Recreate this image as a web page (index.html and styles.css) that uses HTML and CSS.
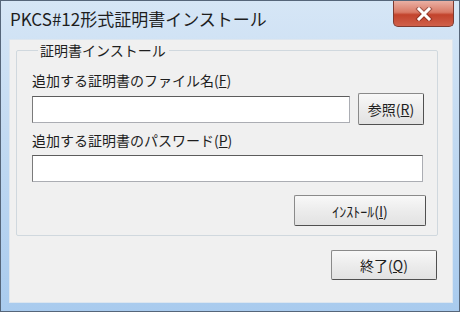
FILE: index.html
```html
<!DOCTYPE html>
<html lang="ja">
<head>
  <meta charset="UTF-8" />
  <title>PKCS#12形式証明書インストール</title>
  <link rel="stylesheet" href="styles.css">
</head>
<body>
  <div class="window">
    <div class="titlebar">
      <span class="title">PKCS#12形式証明書インストール</span>
      <button class="close-btn" aria-label="閉じる">
        <svg width="18" height="14" viewBox="0 0 18 14">
          <path d="M4 2 L14 12 M14 2 L4 12" stroke="#5a1a12" stroke-width="5" stroke-linecap="square" fill="none" opacity="0.45"/>
          <path d="M4 2 L14 12 M14 2 L4 12" stroke="#ffffff" stroke-width="3" stroke-linecap="square" fill="none"/>
        </svg>
      </button>
    </div>

    <div class="client">
      <fieldset class="group">
        <legend>証明書インストール</legend>

        <div class="label">追加する証明書のファイル名(<u>F</u>)</div>
        <div class="file-row">
          <input type="text" class="field file-field" />
          <button class="btn browse-btn">参照(<u>R</u>)</button>
        </div>

        <div class="label label-pass">追加する証明書のパスワード(<u>P</u>)</div>
        <input type="password" class="field pass-field" />

        <div class="install-row">
          <button class="btn install-btn">ｲﾝｽﾄｰﾙ(<u>I</u>)</button>
        </div>
      </fieldset>

      <div class="footer">
        <button class="btn exit-btn">終了(<u>Q</u>)</button>
      </div>
    </div>
  </div>
</body>
</html>
```

FILE: styles.css
```css
body {
  margin: 0;
  font-family: "Noto Sans CJK JP", "Noto Sans", sans-serif;
  background: #ffffff;
}

.window {
  width: 460px;
  height: 312px;
  box-sizing: border-box;
  border: 1px solid #56667a;
  background: linear-gradient(to bottom, #d6e6f6 0%, #c4dbf2 40%, #a9cbee 100%);
  display: flex;
  flex-direction: column;
}

.titlebar {
  height: 38px;
  display: flex;
  justify-content: space-between;
  align-items: flex-start;
}

.title {
  padding: 7px 0 0 9px;
  font-size: 17px;
  line-height: 21px;
  color: #1e1e1e;
}

.close-btn {
  width: 61px;
  height: 26px;
  margin-right: 5px;
  padding: 0;
  border: 1px solid #7d3a30;
  border-top: none;
  border-radius: 0 0 5px 5px;
  background: linear-gradient(to bottom, #eab0a4 0%, #d97a66 45%, #c2432c 55%, #d0604a 100%);
  display: flex;
  align-items: center;
  justify-content: center;
}

.client {
  flex: 1;
  margin: 0 6px 8px 8px;
  background: #f0f0f0;
  border: 1px solid #dde6ef;
  display: flex;
  flex-direction: column;
}

.group {
  margin: 1px 14px 0 6px;
  padding: 12px 13px 9px 15px;
  border: 1px solid #d0d8de;
  border-radius: 2px;
}

.group legend {
  margin-left: 6px;
  padding: 0 3px 0 2px;
  font-size: 14px;
  line-height: 18px;
  color: #1e1e1e;
}

.label {
  font-size: 14px;
  line-height: 18px;
  color: #1e1e1e;
}

.label-pass {
  margin-top: 6px;
}

.file-row {
  margin-top: 4px;
  display: flex;
  align-items: center;
  gap: 8px;
}

.field {
  height: 27px;
  box-sizing: border-box;
  margin: 0;
  border: 1px solid #abadb3;
  border-top-color: #5c5c5c;
  border-left-color: #7a7a7a;
  background: #ffffff;
}

.file-field {
  width: 318px;
}

.pass-field {
  display: block;
  width: 391px;
  margin-top: 6px;
}

.btn {
  box-sizing: border-box;
  padding: 0;
  border: 1px solid #8a8a8a;
  border-right-color: #505050;
  border-bottom-color: #505050;
  border-radius: 2px;
  background: linear-gradient(to bottom, #f8f8f8 0%, #ececec 50%, #e2e2e2 100%);
  font-family: "Noto Sans CJK JP", "Noto Sans", sans-serif;
  font-size: 14px;
  color: #1e1e1e;
}

.browse-btn {
  width: 66px;
  height: 32px;
}

.install-row {
  margin-top: 13px;
  display: flex;
  justify-content: flex-end;
}

.install-btn {
  width: 132px;
  height: 31px;
  margin-right: -2px;
}

.footer {
  margin-top: 14px;
  display: flex;
  justify-content: flex-end;
  padding-right: 15px;
}

.exit-btn {
  width: 106px;
  height: 30px;
}
```
